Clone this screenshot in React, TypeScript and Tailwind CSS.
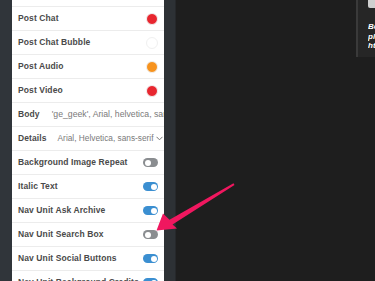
import React from 'react';

type Row =
    | { label: string; kind: 'dot'; color: string }
    | { label: string; kind: 'text'; value: string; chevron?: boolean }
    | { label: string; kind: 'toggle'; on: boolean };

const rows: Row[] = [
    { label: 'Post Text', kind: 'toggle', on: false },
    { label: 'Post Chat', kind: 'dot', color: '#e8262f' },
    { label: 'Post Chat Bubble', kind: 'dot', color: '#ffffff' },
    { label: 'Post Audio', kind: 'dot', color: '#f7931e' },
    { label: 'Post Video', kind: 'dot', color: '#e8262f' },
    { label: 'Body', kind: 'text', value: "'ge_geek', Arial, helvetica, sans-serif" },
    { label: 'Details', kind: 'text', value: 'Arial, Helvetica, sans-serif', chevron: true },
    { label: 'Background Image Repeat', kind: 'toggle', on: false },
    { label: 'Italic Text', kind: 'toggle', on: true },
    { label: 'Nav Unit Ask Archive', kind: 'toggle', on: true },
    { label: 'Nav Unit Search Box', kind: 'toggle', on: false },
    { label: 'Nav Unit Social Buttons', kind: 'toggle', on: true },
    { label: 'Nav Unit Background Credits', kind: 'toggle', on: true },
];

const Toggle = ({ on }: { on: boolean }) => (
    <div
        className={`w-[15px] h-[9px] rounded-full flex items-center px-[1.5px] ${
            on ? 'bg-[#3b8fd1] justify-end' : 'bg-[#8a8d90] justify-start'
        }`}
    >
        <div className="w-[6px] h-[6px] rounded-full bg-white" />
    </div>
);

export default function App() {
    return (
        <div
            className="relative w-[375px] h-[281px] overflow-hidden bg-[#1e1e1e] flex"
            style={{ fontFamily: '"Liberation Sans", Arial, sans-serif' }}
        >
            <div className="w-[12px] bg-[#30353a] shrink-0" />

            <div className="w-[152px] bg-white shrink-0 overflow-hidden">
                <div className="-mt-[17px]">
                    {rows.map((row, i) => (
                        <div
                            key={i}
                            className="h-[24px] border-b border-[#ececec] flex items-center pl-[6px] pr-[6px] whitespace-nowrap"
                        >
                            <span className="text-[8.5px] font-bold text-[#4a4a4a] tracking-[0.1px] shrink-0">
                                {row.label}
                            </span>
                            {row.kind === 'dot' && (
                                <div
                                    className="ml-auto w-[12px] h-[12px] rounded-full border border-[#f0f0f0]"
                                    style={{ backgroundColor: row.color }}
                                />
                            )}
                            {row.kind === 'toggle' && (
                                <div className="ml-auto">
                                    <Toggle on={row.on} />
                                </div>
                            )}
                            {row.kind === 'text' && (
                                <div
                                    className={`flex items-center shrink-0 text-[#7a7a7a] ${
                                        row.chevron ? 'ml-[11px] text-[8.3px]' : 'ml-[12px] text-[8.7px]'
                                    }`}
                                >
                                    <span>{row.value}</span>
                                    {row.chevron && (
                                        <svg width="7" height="5" viewBox="0 0 7 5" className="ml-[3px] shrink-0">
                                            <path d="M0.5 0.8 L3.5 3.8 L6.5 0.8" fill="none" stroke="#777" strokeWidth="1" />
                                        </svg>
                                    )}
                                </div>
                            )}
                        </div>
                    ))}
                </div>
            </div>

            <div className="w-[12px] bg-[#2d3135] border-r border-[#26282b] shrink-0" />

            <div className="flex-1 flex justify-end">
                <div className="w-[19px] h-[57px] bg-[#262626] border-l-[2px] border-[#3a3a3a] flex flex-col pl-[10px]">
                    <div className="h-[8px] w-[10px] bg-[#cfcfcf] rounded-bl-[2px]" />
                    <div className="mt-[14px] text-[8px] leading-[9.5px] font-bold italic text-white overflow-hidden">
                        <div>Bo</div>
                        <div>pl</div>
                        <div>ht</div>
                    </div>
                </div>
            </div>

            <svg
                className="absolute left-0 top-0 pointer-events-none"
                width="375"
                height="281"
                viewBox="0 0 375 281"
            >
                <path
                    d="M233.5 183.3 L234.5 185 L172.5 224.5 L177 228.5 L156.5 230.5 L163 213.5 L169.5 219.8 Z"
                    fill="#f0175f"
                />
            </svg>
        </div>
    );
}
